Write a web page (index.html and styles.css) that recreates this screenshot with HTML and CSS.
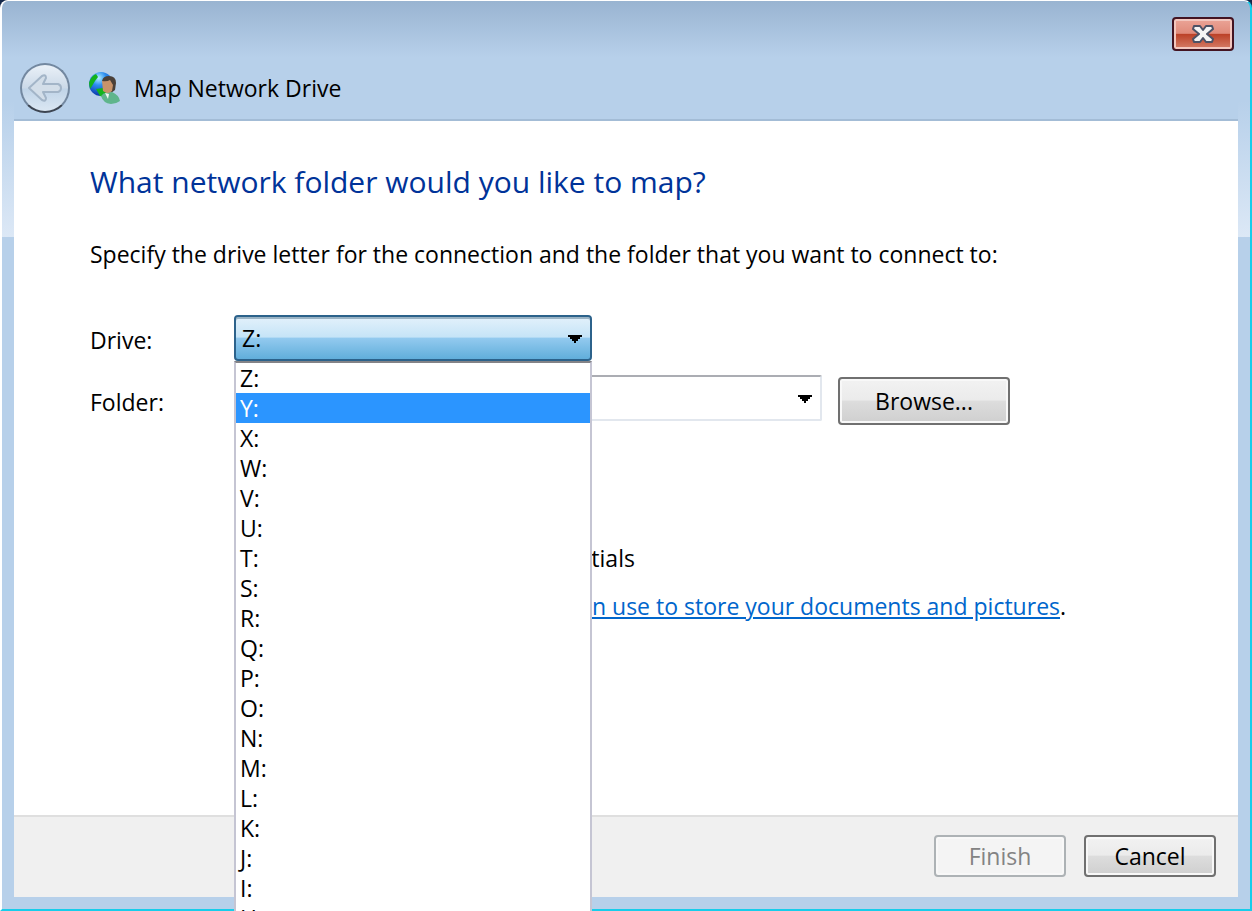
FILE: index.html
```html
<!DOCTYPE html>
<html lang="en">
<head>
<meta charset="UTF-8" />
<meta name="viewport" content="width=device-width, initial-scale=1" />
<title>Map Network Drive</title>
<link rel="stylesheet" href="styles.css">
</head>
<body>

<div class="window">
  <header class="titlebar">
    <button class="close" aria-label="Close">
      <svg width="22" height="18" viewBox="0 0 22 18">
        <path d="M2 1h6l3 4 3-4h6l1 3-6 5 6 5-1 3h-6l-3-4-3 4H2l-1-3 6-5-6-5z" fill="#f4f4f4" stroke="#4c5266" stroke-width="2" stroke-linejoin="round"/>
      </svg>
    </button>
    <div class="caption">
      <button class="back" aria-label="Back" disabled>
        <svg width="34" height="28" viewBox="0 0 34 28">
          <path d="M1 14L14 2q4-2 4 2l-3 6h15q3 1 3 4t-3 4H15l3 6q0 4-4 2z" fill="#d3dee9" stroke="#a3b5c8" stroke-width="2" stroke-linejoin="round"/>
        </svg>
      </button>
      <svg class="app-icon" width="32" height="32" viewBox="0 0 32 32">
        <defs>
          <radialGradient id="sea" cx="40%" cy="25%" r="75%">
            <stop offset="0" stop-color="#b4f0ff"/>
            <stop offset="0.4" stop-color="#2d8ff0"/>
            <stop offset="1" stop-color="#0a35a8"/>
          </radialGradient>
        </defs>
        <circle cx="13" cy="12" r="12" fill="url(#sea)"/>
        <path d="M1 11q2-7 7-9l2 3-3 4-3 5-2 3zM8 17l7-1 4 4-3 5-4-1z" fill="#13b31c"/>
        <path d="M14 9q1-5 7-5 7 0 7 7l-1 7-4 3z" fill="#4b4038"/>
        <path d="M14 9q5 1 8-1l3 5-1 6-4 3-5-3z" fill="#c8936a"/>
        <path d="M13 24q3-4 7-3l4-1q7 3 8 9-4 3-9 3-8-1-10-8z" fill="#5fb58c"/>
        <path d="M17 21l3 6 1-5z" fill="#f2f5f2"/>
      </svg>
      <h1>Map Network Drive</h1>
    </div>
  </header>

  <main class="content">
    <h2>What network folder would you like to map?</h2>
    <p class="intro">Specify the drive letter for the connection and the folder that you want to connect to:</p>

    <div class="form">
      <label for="drive">Drive:</label>
      <div class="drive">
        <select id="drive">
          <option>Z:</option>
        </select>
        <svg class="arrow" width="14" height="8" viewBox="0 0 14 8"><path d="M0 0h14v2h-2v2h-2v2H8v2H6V6H4V4H2V2H0z"/></svg>
        <ul class="list" role="listbox" aria-label="Drive letters">
          <li role="option">Z:</li>
          <li role="option" class="selected" aria-selected="true">Y:</li>
          <li role="option">X:</li>
          <li role="option">W:</li>
          <li role="option">V:</li>
          <li role="option">U:</li>
          <li role="option">T:</li>
          <li role="option">S:</li>
          <li role="option">R:</li>
          <li role="option">Q:</li>
          <li role="option">P:</li>
          <li role="option">O:</li>
          <li role="option">N:</li>
          <li role="option">M:</li>
          <li role="option">L:</li>
          <li role="option">K:</li>
          <li role="option">J:</li>
          <li role="option">I:</li>
          <li role="option">H:</li>
        </ul>
      </div>

      <label for="folder">Folder:</label>
      <div class="folder-row">
        <div class="folder">
          <input type="text" id="folder">
          <svg class="arrow" width="14" height="8" viewBox="0 0 14 8"><path d="M0 0h14v2h-2v2h-2v2H8v2H6V6H4V4H2V2H0z"/></svg>
        </div>
        <button class="btn browse">Browse...</button>
      </div>

      <div class="options">
        <label class="credentials"><input type="checkbox">Connect using different credentials</label>
        <p><a href="#">Connect to a Web site that you can use to store your documents and pictures</a>.</p>
      </div>
    </div>
  </main>

  <footer class="footer">
    <button class="btn" disabled>Finish</button>
    <button class="btn">Cancel</button>
  </footer>
</div>

</body>
</html>
```

FILE: styles.css
```css
* {
  box-sizing: border-box;
}
body {
  margin: 0;
  height: 100vh;
  overflow: hidden;
  background: #14284a;
  color: #000;
  font-family: 'Segoe UI', 'Open Sans', 'Noto Sans', sans-serif;
  font-size: 23px;
  line-height: 30px;
}
h1, h2, p, ul {
  margin: 0;
  padding: 0;
  font-weight: 400;
}
button, input, select {
  font: inherit;
  color: inherit;
}
.window {
  display: flex;
  flex-direction: column;
  height: 100vh;
  padding: 0 12px 12px;
  border: 2px solid #17cdea;
  border-top: 1px solid #fff;
  border-left-color: #fff;
  border-radius: 8px 8px 0 0;
  background:
    linear-gradient(#99b4d1, #b7d0ea) 0 0 / 100% 56px no-repeat,
    linear-gradient(#b7d0ea, #dce8f6) 0 100px / 100% 136px no-repeat,
    #b7d0ea;
}
.titlebar {
  display: flex;
  flex-direction: column;
  height: 120px;
  border-bottom: 2px solid #a3bcd6;
  background: linear-gradient(#b7d0ea, #b7d0ea) 0 100% / 100% 30px no-repeat;
}
.close {
  display: flex;
  align-items: center;
  justify-content: center;
  align-self: flex-end;
  width: 62px;
  height: 34px;
  margin: 16px 4px 0 0;
  padding: 0;
  border: 2px solid #431422;
  border-radius: 4px;
  background: linear-gradient(#eba598, #e08a7a 48%, #bb4026 50%, #d67e69);
  box-shadow: inset 0 0 0 2px #f3c7bf;
}
.caption {
  display: flex;
  align-items: center;
  padding-left: 6px;
  margin-top: 12px;
}
.back {
  display: flex;
  align-items: center;
  justify-content: center;
  width: 50px;
  height: 50px;
  padding: 0;
  border: 2px solid #7388a0;
  border-bottom-color: #3d4552;
  border-radius: 50%;
  background: linear-gradient(#eaf1f8, #cbd9e8 50%, #c0d4e8 52%, #dbe7f3);
}
.app-icon {
  margin: 0 14px 0 18px;
}
h1 {
  font-size: 23px;
}
.content {
  flex: 1;
  padding: 40px 76px 0;
  background: #fff;
}
h2 {
  color: #003399;
  font-size: 30px;
  line-height: 42px;
}
.intro {
  margin-top: 36px;
}
.form {
  display: grid;
  grid-template-columns: 144px 1fr;
  row-gap: 14px;
  align-items: center;
  margin-top: 46px;
}
.form > label {
  padding-top: 4px;
}
.drive {
  position: relative;
  width: 358px;
}
.drive select {
  display: block;
  width: 100%;
  height: 46px;
  padding: 0 6px;
  border: 2px solid #2c628b;
  border-radius: 4px;
  appearance: none;
  background: linear-gradient(#e3f1fb, #c5e4f7 48%, #93caef 50%, #61aedb);
  box-shadow: inset 0 2px 0 #9ab3c4;
}
.arrow {
  position: absolute;
  top: 20px;
  right: 10px;
}
.list {
  position: absolute;
  z-index: 1;
  top: 46px;
  left: 0;
  width: 100%;
  border: 2px solid #c5c5d3;
  border-top-color: #838387;
  background: #fff;
  list-style: none;
}
.list li {
  padding-left: 4px;
}
.list .selected {
  background: #2b95ff;
  color: #fff;
}
.folder-row {
  display: flex;
  align-items: flex-start;
  gap: 16px;
}
.folder {
  position: relative;
  width: 588px;
}
.folder input {
  display: block;
  width: 100%;
  height: 46px;
  padding: 0 36px 0 8px;
  border: 2px solid #e2e7ee;
  border-top-color: #abadb3;
  border-radius: 2px;
}
.btn {
  width: 132px;
  height: 42px;
  padding: 0;
  border: 2px solid #707070;
  border-radius: 4px;
  background: linear-gradient(#f2f2f2, #ebebeb 48%, #dddddd 50%, #cfcfcf);
  box-shadow: inset 0 0 0 2px #f8f8f8;
}
.btn:disabled {
  border-color: #adb2b5;
  background: #f4f4f4;
  color: #838383;
}
.browse {
  width: 172px;
  height: 48px;
  margin-top: 2px;
}
.options {
  grid-column: 2;
  padding-top: 104px;
}
.credentials {
  display: flex;
  align-items: center;
  gap: 8px;
  margin-bottom: 18px;
}
.credentials input {
  width: 18px;
  height: 18px;
  margin: 0;
}
a {
  color: #0066cc;
}
.footer {
  display: flex;
  justify-content: flex-end;
  gap: 18px;
  height: 82px;
  padding: 18px 22px 0;
  border-top: 2px solid #dfdfdf;
  background: #f0f0f0;
}
```
